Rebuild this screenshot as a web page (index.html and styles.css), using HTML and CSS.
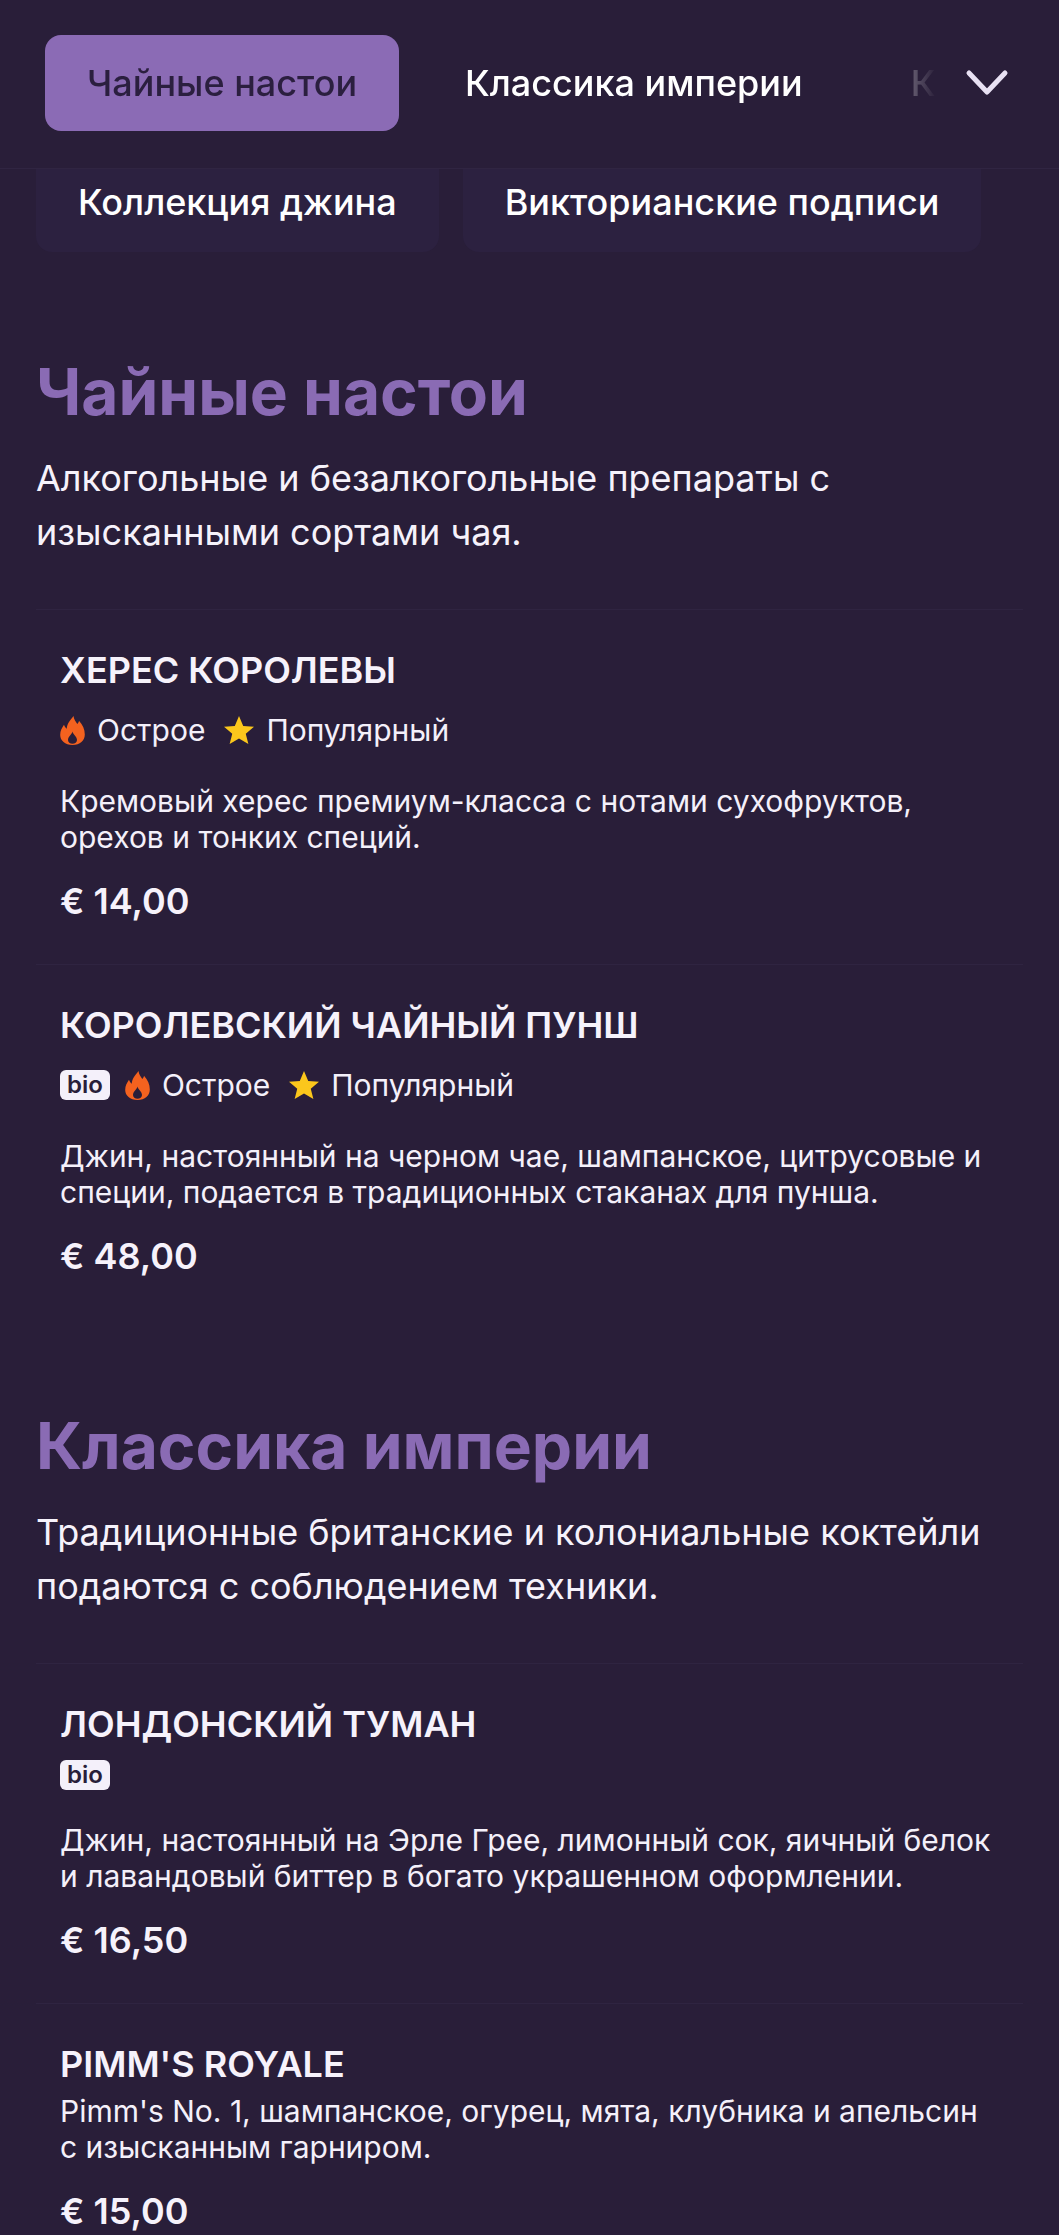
FILE: index.html
```html
<!DOCTYPE html>
<html lang="ru">
<head>
<meta charset="utf-8">
<title>Меню</title>
<link rel="stylesheet" href="styles.css">
</head>
<body>
<svg class="defs" width="0" height="0" aria-hidden="true">
  <symbol id="fire" viewBox="0 0 25 29">
    <path fill="#f4621f" fill-rule="evenodd" d="M13.500 0C14 3.500 15.800 5.800 17.300 8 18.200 7.200 18.800 6.200 19 4.800 22.800 9 24.800 13.500 24.800 18.500 24.800 24.500 20 29 12.500 29 5 29 .2 24.500 .2 19 .2 15 1.800 12 4 8.800 4.600 10.500 5.500 12 6.800 12.800 6.800 8 10 4.500 13.500 0ZM12.500 15.500C12.800 18.500 17 20.500 17 24 17 26.300 15 27.700 12.500 27.700 10 27.700 8 26.300 8 24 8 20.500 12 18.500 12.500 15.500Z"/>
  </symbol>
  <symbol id="star" viewBox="0 0 32 30">
    <path fill="#fbc71c" d="M16 0l4.500 10.600L32 11.500l-8.800 7.400L26 30l-10-6-10 6 2.800-11.100L0 11.500l11.500-.9z"/>
  </symbol>
</svg>
<header class="topbar">
  <nav class="tabs">
    <a class="tab tab-active">Чайные настои</a>
    <a class="tab">Классика империи</a>
    <a class="tab tab-next">К</a>
  </nav>
  <svg class="chevron" viewBox="0 0 44 28" aria-hidden="true"><path d="M4 4l18 19L40 4" fill="none" stroke="#e8e1f3" stroke-width="5" stroke-linecap="round" stroke-linejoin="round"/></svg>
</header>
<main class="page">
  <div class="chips">
    <a class="chip">Коллекция джина</a>
    <a class="chip">Викторианские подписи</a>
  </div>

  <section class="section">
    <h2 class="section-title">Чайные настои</h2>
    <p class="section-lead">Алкогольные и безалкогольные препараты с изысканными сортами чая.</p>
    <article class="item">
      <h3 class="item-title">ХЕРЕС КОРОЛЕВЫ</h3>
      <div class="tags">
        <span class="tag"><svg class="ico-fire"><use href="#fire"/></svg>Острое</span>
        <span class="tag"><svg class="ico-star"><use href="#star"/></svg>Популярный</span>
      </div>
      <p class="item-desc">Кремовый херес премиум-класса с нотами сухофруктов, орехов и тонких специй.</p>
      <div class="price">€ 14,00</div>
    </article>
    <article class="item">
      <h3 class="item-title">КОРОЛЕВСКИЙ ЧАЙНЫЙ ПУНШ</h3>
      <div class="tags">
        <span class="bio">bio</span>
        <span class="tag"><svg class="ico-fire"><use href="#fire"/></svg>Острое</span>
        <span class="tag"><svg class="ico-star"><use href="#star"/></svg>Популярный</span>
      </div>
      <p class="item-desc">Джин, настоянный на черном чае, шампанское, цитрусовые и специи, подается в традиционных стаканах для пунша.</p>
      <div class="price">€ 48,00</div>
    </article>
  </section>

  <section class="section">
    <h2 class="section-title">Классика империи</h2>
    <p class="section-lead">Традиционные британские и колониальные коктейли подаются с соблюдением техники.</p>
    <article class="item">
      <h3 class="item-title">ЛОНДОНСКИЙ ТУМАН</h3>
      <div class="tags tags-tight">
        <span class="bio">bio</span>
      </div>
      <p class="item-desc">Джин, настоянный на Эрле Грее, лимонный сок, яичный белок и лавандовый биттер в богато украшенном оформлении.</p>
      <div class="price">€ 16,50</div>
    </article>
    <article class="item item-plain">
      <h3 class="item-title">PIMM'S ROYALE</h3>
      <p class="item-desc">Pimm's No. 1, шампанское, огурец, мята, клубника и апельсин с изысканным гарниром.</p>
      <div class="price">€ 15,00</div>
    </article>
  </section>
</main>
</body>
</html>
```
FILE: styles.css
```css
* { box-sizing: border-box; }
html, body { margin: 0; padding: 0; }
body {
  height: 2235px;
  overflow: hidden;
  background: #291e39;
  color: #f4f0fa;
  font-family: Inter, "Noto Sans", sans-serif;
}
.defs { position: absolute; }

.topbar {
  position: absolute;
  top: 0;
  left: 0;
  right: 0;
  height: 169px;
  display: flex;
  align-items: center;
  justify-content: space-between;
  padding: 0 50px 2px 45px;
  background: #291e39;
  border-bottom: 1px solid #302542;
  z-index: 2;
}
.tabs {
  display: flex;
  align-items: center;
  width: 892px;
  -webkit-mask-image: linear-gradient(to right, #000 800px, transparent 892px);
  mask-image: linear-gradient(to right, #000 800px, transparent 892px);
}
.tab {
  font-size: 36px;
  font-weight: 500;
  line-height: 96px;
  padding: 0 42px;
  white-space: nowrap;
  color: #fff;
}
.tab-active {
  background: #8b6bb5;
  color: #2b1f3f;
  border-radius: 16px;
  padding: 0 42px;
  margin-right: 24px;
}
.tab-next { margin-left: 66px; padding: 0; }
.chevron { width: 44px; height: 28px; }

.page { padding: 0 36px; }

.chips {
  display: flex;
  gap: 24px;
  padding-top: 152px;
  margin-bottom: 101px;
}
.chip {
  background: #2c2140;
  border-radius: 16px;
  font-size: 36px;
  font-weight: 500;
  line-height: 100px;
  padding: 0 42px;
  color: #fff;
  white-space: nowrap;
}

.section { margin-bottom: 88px; }
.section:last-child { margin-bottom: 0; }
.section-title {
  margin: 0;
  color: #8a6bb4;
  font-size: 64px;
  font-weight: 700;
  line-height: 78px;
}
.section-lead {
  margin: 20px 0 50px;
  font-size: 36px;
  line-height: 54px;
  color: #f6f2fb;
}

.item {
  padding: 38px 24px 41px;
  border-top: 1px solid #2f2441;
}
.item-plain { padding-bottom: 0; }
.item-title {
  margin: 0;
  font-size: 36px;
  font-weight: 600;
  line-height: 44px;
  color: #f6f2fb;
}
.tags {
  display: flex;
  align-items: center;
  gap: 19px;
  height: 44px;
  margin-top: 16px;
  font-size: 30px;
}
.tags-tight { margin-top: 14px; height: 30px; }
.tag { display: inline-flex; align-items: center; gap: 12px; }
.ico-fire { width: 25px; height: 29px; }
.ico-star { width: 30px; height: 30px; }
.bio {
  background: #f4f0fa;
  color: #291e39;
  font-size: 24px;
  font-weight: 600;
  line-height: 30px;
  padding: 0 7px;
  border-radius: 6px;
  margin-right: -4px;
}
.item-desc {
  margin: 31px 0 0;
  font-size: 30px;
  line-height: 36px;
  color: #f4f0fa;
}
.tags-tight + .item-desc { margin-top: 32px; }
.item-plain .item-desc { margin-top: 7px; }
.price {
  margin-top: 24px;
  font-size: 36px;
  font-weight: 600;
  line-height: 44px;
  color: #f6f2fb;
}
```
